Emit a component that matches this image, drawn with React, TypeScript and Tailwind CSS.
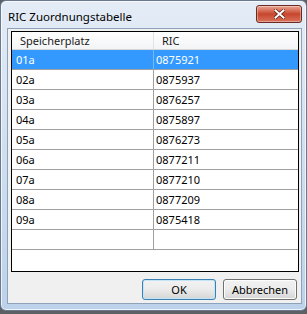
import React from "react";

const rows = [
  ["01a", "0875921"],
  ["02a", "0875937"],
  ["03a", "0876257"],
  ["04a", "0875897"],
  ["05a", "0876273"],
  ["06a", "0877211"],
  ["07a", "0877210"],
  ["08a", "0877209"],
  ["09a", "0875418"],
  ["", ""],
];

export default function App() {
  return (
    <div
      className="w-[307px] h-[314px] bg-[#5c5f63] overflow-hidden text-[11px] text-black"
      style={{ fontFamily: '"Segoe UI", "Noto Sans", "Open Sans", sans-serif' }}
    >
      <div className="w-[307px] h-[311px] flex flex-col rounded-[6px] border border-[#6a7a8e] bg-gradient-to-b from-[#e4ecf6] via-[#cfdff0] to-[#bcd2ea] shadow-[inset_0_0_0_1px_rgba(255,255,255,0.7)]">
        {/* title bar */}
        <div className="h-[27px] flex items-start justify-between pl-[7px] pr-[4px]">
          <div className="pt-[8px] leading-[15px] text-[11.5px] text-black">RIC Zuordnungstabelle</div>
          <button className="mt-[4px] w-[46px] h-[18px] rounded-[3px] border border-[#6b2a22] bg-gradient-to-b from-[#e8a493] via-[#c7452c] to-[#d9735b] flex items-center justify-center shadow-[inset_0_0_0_1px_rgba(255,255,255,0.35)]">
            <svg width="11" height="10" viewBox="0 0 11 10">
              <path d="M1.5 1.5 L9.5 8.5 M9.5 1.5 L1.5 8.5" stroke="#5a1a10" strokeWidth="3.4" strokeLinecap="square" />
              <path d="M1.5 1.5 L9.5 8.5 M9.5 1.5 L1.5 8.5" stroke="#ffffff" strokeWidth="2" strokeLinecap="square" />
            </svg>
          </button>
        </div>

        {/* client area */}
        <div className="ml-[6px] mr-[4px] mb-[6px] flex-1 flex flex-col border border-[#8ea3bb] bg-[#f0f0f0] pt-[2px] pl-[3px] pr-[2px]">
          <div className="h-[241px] border border-black bg-white flex flex-col">
            <div className="h-[18px] flex border-b border-[#d5d5d5] bg-gradient-to-b from-white to-[#f3f4f6] text-[#1a1a1a] leading-[17px]">
              <div className="w-[142px] pl-[8px] border-r border-[#e0e3e8]">Speicherplatz</div>
              <div className="flex-1 pl-[8px]">RIC</div>
            </div>
            {rows.map(([a, b], i) => (
              <div
                key={i}
                className={
                  "h-[20px] flex border-b border-[#a0a0a0] leading-[19px] " +
                  (i === 0 ? "bg-[#3399ff] text-white" : "")
                }
              >
                <div
                  className={
                    "w-[142px] pl-[4px] border-r " +
                    (i === 0 ? "border-[#7ab8f5]" : "border-[#a0a0a0]")
                  }
                >
                  {a}
                </div>
                <div className="flex-1 pl-[2px]">{b}</div>
              </div>
            ))}
          </div>

          <div className="flex justify-end gap-[7px] pr-[2px] mt-[7px]">
            <button className="w-[74px] h-[21px] rounded-[3px] border border-[#3c7fb1] bg-gradient-to-b from-[#f2f2f2] via-[#ebebeb] to-[#d5d5d5] shadow-[inset_0_0_0_1px_#c4e5f6] leading-[19px]">
              OK
            </button>
            <button className="w-[74px] h-[21px] rounded-[3px] border border-[#707070] bg-gradient-to-b from-[#f2f2f2] via-[#ebebeb] to-[#d5d5d5] shadow-[inset_0_0_0_1px_#fcfcfc] leading-[19px]">
              Abbrechen
            </button>
          </div>
        </div>
      </div>
    </div>
  );
}
